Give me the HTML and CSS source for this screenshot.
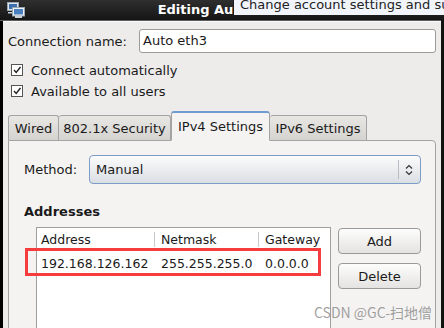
FILE: index.html
```html
<!DOCTYPE html>
<html>
  <head>
    <title>Editing Auto eth3</title>
    <meta charset="UTF-8" />
    <link rel="stylesheet" href="styles.css">
  </head>

  <body>
    <div class="window">
      <div class="titlebar">
        <svg class="title_icon" width="18" height="16" viewBox="0 0 18 16">
          <rect x="0.5" y="0.5" width="11" height="8" fill="#dfe6ee" stroke="#9aa6b2" />
          <rect x="2" y="2" width="8" height="5" fill="#3d6fae" />
          <rect x="5.5" y="5.5" width="12" height="8.5" fill="#eef2f6" stroke="#9aa6b2" />
          <rect x="7" y="7" width="9" height="5.5" fill="#4a7fc0" />
          <rect x="8" y="14" width="7" height="2" fill="#c8cfd6" />
          <rect x="1" y="10" width="4" height="1.5" fill="#c8cfd6" />
        </svg>
        <span class="title_text">Editing Auto eth3</span>
        <div class="tooltip">Change account settings and sudo rights</div>
      </div>

      <div class="content">
        <div class="name_row">
          <span class="name_label">Connection name:</span>
          <div class="text_input">Auto eth3</div>
        </div>

        <div class="checks">
          <div class="check_row">
            <span class="check_box">
              <svg width="10" height="10" viewBox="0 0 10 10"><path d="M2 5 L4.2 7.5 L8.5 2" fill="none" stroke="#222" stroke-width="1.4" /></svg>
            </span>
            <span>Connect automatically</span>
          </div>
          <div class="check_row">
            <span class="check_box">
              <svg width="10" height="10" viewBox="0 0 10 10"><path d="M2 5 L4.2 7.5 L8.5 2" fill="none" stroke="#222" stroke-width="1.4" /></svg>
            </span>
            <span>Available to all users</span>
          </div>
        </div>

        <div class="tabs">
          <div class="tab tab_wired">Wired</div>
          <div class="tab tab_security">802.1x Security</div>
          <div class="tab tab_active">IPv4 Settings</div>
          <div class="tab tab_ipv6">IPv6 Settings</div>
        </div>

        <div class="panel">
          <div class="method_row">
            <span class="method_label">Method:</span>
            <div class="combo">
              <span class="combo_value">Manual</span>
              <span class="combo_sep"></span>
              <svg class="combo_arrow" width="8" height="12" viewBox="0 0 8 12">
                <path d="M1 4.5 L4 1.5 L7 4.5 M1 7.5 L4 10.5 L7 7.5" fill="none" stroke="#333" stroke-width="1.2" />
              </svg>
            </div>
          </div>

          <div class="section_title">Addresses</div>

          <div class="addresses">
            <div class="table">
              <div class="table_head">
                <span class="col col_address">Address</span>
                <span class="col col_netmask">Netmask</span>
                <span class="col col_gateway">Gateway</span>
              </div>
              <div class="table_row">
                <span class="col col_address">192.168.126.162</span>
                <span class="col col_netmask">255.255.255.0</span>
                <span class="col col_gateway">0.0.0.0</span>
              </div>
            </div>
            <div class="buttons">
              <button class="btn">Add</button>
              <button class="btn">Delete</button>
            </div>
            <div class="highlight"></div>
          </div>
        </div>
      </div>

      <div class="watermark">CSDN @GC-扫地僧</div>
    </div>
  </body>
</html>
```

FILE: styles.css
```css
body {
  margin: 0;
  background: #000;
  font-family: "DejaVu Sans", sans-serif;
  font-size: 13px;
  color: #1a1a1a;
}

.window {
  position: relative;
  width: 444px;
  height: 328px;
  overflow: hidden;
  display: flex;
  flex-direction: column;
}

.titlebar {
  position: relative;
  height: 20px;
  flex: none;
  display: flex;
  align-items: center;
  justify-content: center;
  background: linear-gradient(#2f2f2f, #151515);
  border-bottom: 1px solid #5c5c5c;
}

.title_icon {
  position: absolute;
  left: 7px;
  top: 2px;
}

.title_text {
  color: #fff;
  font-weight: bold;
  font-size: 13px;
  margin-top: -1px;
}

.tooltip {
  position: absolute;
  z-index: 2;
  left: 233px;
  top: -5px;
  width: 240px;
  height: 19px;
  padding: 0 6px;
  background: #f1f5fb;
  border: 1px solid #1c1c1c;
  color: #222;
  font-size: 13px;
  line-height: 17px;
  white-space: nowrap;
  overflow: hidden;
}

.content {
  flex: 1;
  margin: 0 3px 0 3px;
  padding: 7px 5px 0 5px;
  background: #edeceb;
  border-top: 1px solid #fafafa;
}

.name_row {
  display: flex;
  align-items: center;
  height: 24px;
}

.name_label {
  width: 131px;
  flex: none;
}

.text_input {
  flex: 1;
  height: 22px;
  line-height: 22px;
  padding-left: 3px;
  background: #fff;
  border: 1px solid #9b9b9b;
  border-radius: 3px;
}

.checks {
  display: flex;
  flex-direction: column;
  gap: 5px;
  margin-top: 9px;
}

.check_row {
  display: flex;
  align-items: center;
  gap: 8px;
  height: 16px;
  padding-left: 3px;
}

.check_box {
  width: 10px;
  height: 10px;
  border: 1px solid #555;
  background: #fff;
  display: flex;
  align-items: center;
  justify-content: center;
}

.tabs {
  display: flex;
  align-items: flex-end;
  height: 29px;
  margin-top: 12px;
  position: relative;
  z-index: 1;
}

.tab {
  flex: none;
  height: 25px;
  line-height: 26px;
  box-sizing: border-box;
  padding: 0;
  background: linear-gradient(#e9e7e4, #d5d3cf);
  border: 1px solid #a3a3a3;
  border-bottom: none;
  border-radius: 3px 3px 0 0;
  text-align: center;
  white-space: nowrap;
}

.tab_wired {
  width: 51px;
}

.tab_security {
  width: 112px;
  border-left: none;
}

.tab_ipv6 {
  width: 97px;
  border-left: none;
}

.tab_active {
  width: 99px;
  height: 30px;
  line-height: 28px;
  background: #f4f3f2;
  border-top: 2px solid #6f9bd1;
  border-bottom: 1px solid #f4f3f2;
  margin-bottom: -1px;
}

.panel {
  height: 200px;
  padding: 14px 15px 0 15px;
  background: #f4f3f2;
  border: 1px solid #a3a3a3;
  border-radius: 0 4px 0 0;
}

.method_row {
  display: flex;
  align-items: center;
  height: 29px;
}

.method_label {
  width: 65px;
  flex: none;
}

.combo {
  width: 330px;
  height: 27px;
  flex: none;
  display: flex;
  align-items: center;
  background: linear-gradient(#fbfbfb, #dadee3);
  border: 1px solid #7c9dc8;
  border-radius: 4px;
}

.combo_value {
  flex: 1;
  padding-left: 6px;
}

.combo_sep {
  width: 1px;
  height: 19px;
  background: #b9bec4;
  margin-right: 6px;
}

.combo_arrow {
  margin-right: 7px;
}

.section_title {
  font-weight: bold;
  margin-top: 20px;
  height: 16px;
  line-height: 16px;
}

.addresses {
  position: relative;
  display: flex;
  gap: 7px;
  margin-top: 7px;
  padding-left: 12px;
}

.table {
  flex: none;
  width: 293px;
  height: 110px;
  background: #fff;
  border: 1px solid #9e9e9e;
  font-size: 12.5px;
}

.table_head,
.table_row {
  display: flex;
  height: 22px;
  align-items: center;
}

.table_row {
  margin-top: 2px;
}

.col {
  padding-left: 4px;
  box-sizing: border-box;
}

.col_address {
  width: 117px;
}

.col_netmask {
  width: 104px;
}

.col_gateway {
  flex: 1;
}

.table_head .col_netmask,
.table_head .col_gateway {
  border-left: 1px solid #c9c9c9;
  padding-left: 6px;
}

.table_row .col_netmask,
.table_row .col_gateway {
  padding-left: 7px;
}

.buttons {
  flex: none;
  display: flex;
  flex-direction: column;
  gap: 9px;
  padding-top: 1px;
}

.btn {
  width: 83px;
  height: 26px;
  font-family: "DejaVu Sans", sans-serif;
  font-size: 13px;
  color: #1a1a1a;
  background: linear-gradient(#fdfdfd, #e4e3e1);
  border: 1px solid #9a9a9a;
  border-radius: 4px;
  padding: 0;
}

.highlight {
  position: absolute;
  left: 1px;
  top: 21px;
  width: 290px;
  height: 22px;
  border: 3px solid #f63c3c;
}

.watermark {
  position: absolute;
  left: 314px;
  top: 302px;
  font-family: "Noto Sans CJK SC", sans-serif;
  font-size: 14px;
  color: rgba(130, 130, 130, 0.75);
  white-space: nowrap;
}

.window::after {
  content: "";
  position: absolute;
  right: 0;
  top: 20px;
  width: 3px;
  bottom: 0;
  background: #111;
}
```
